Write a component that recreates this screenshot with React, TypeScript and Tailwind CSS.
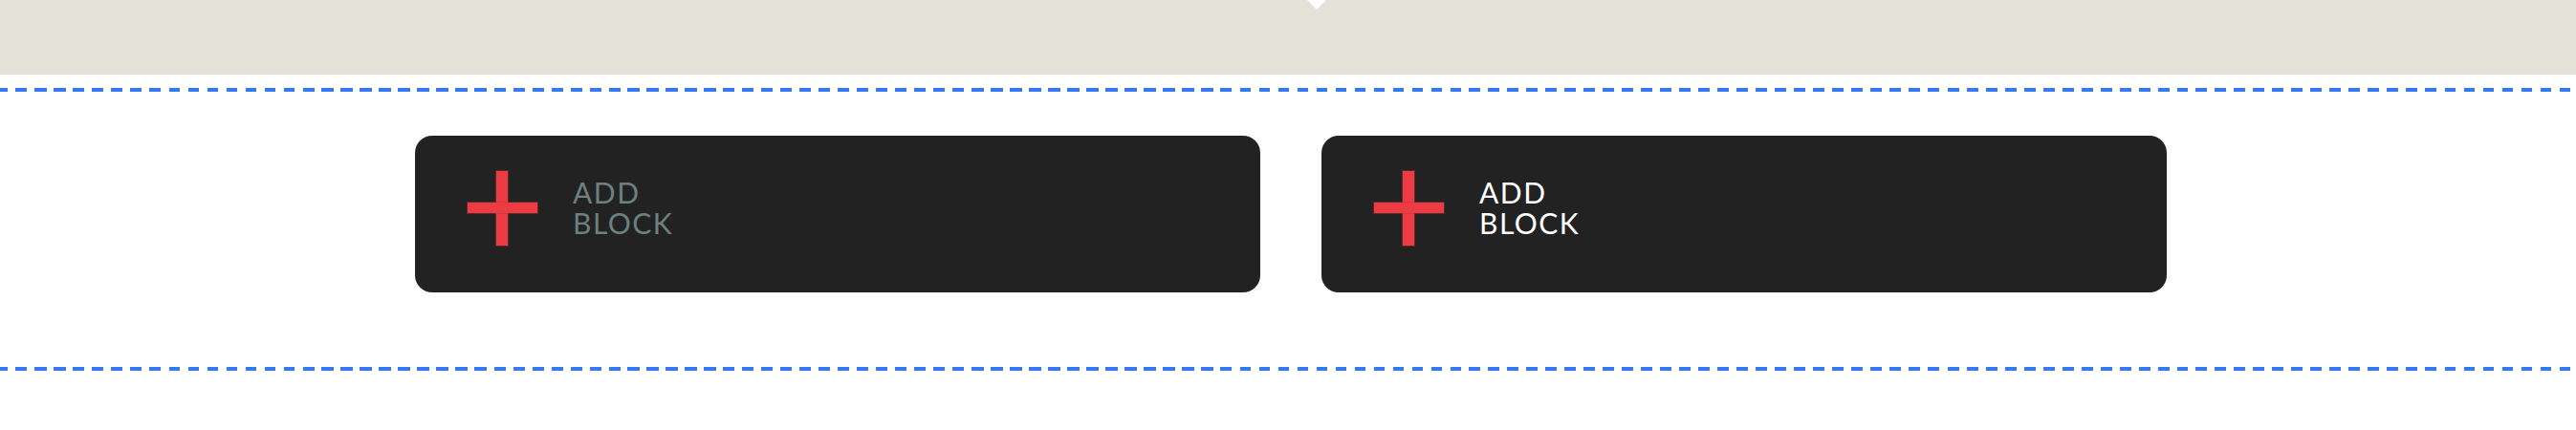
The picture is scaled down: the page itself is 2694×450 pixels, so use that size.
import React from 'react';

const dashed =
  'h-[4px] w-full bg-[repeating-linear-gradient(90deg,#3479f6_0px_8.5px,transparent_8.5px_16.5px,#3479f6_16.5px_20px)]';

const AddBlock = ({ muted }: { muted?: boolean }) => {
  return (
    <button className="w-[884px] h-[164px] shrink-0 rounded-[18px] bg-[#222222] flex items-center pl-[55px] pb-[12px] text-left">
      {/* plus sign */}
      <span className="relative w-[73px] h-[78px] shrink-0">
        <span className="absolute left-[30px] top-0 w-[12px] h-[78px] bg-[#ec3b43] ring-1 ring-[#b8343a]/40" />
        <span className="absolute left-0 top-[33px] w-[73px] h-[11px] bg-[#ec3b43] ring-1 ring-[#b8343a]/40" />
        <span className="absolute left-[30px] top-[33px] w-[12px] h-[11px] bg-[#ec3b43]" />
      </span>
      <span
        className={
          'ml-[37px] -mt-[3px] flex flex-col text-[30px] leading-[32px] font-normal tracking-[1.5px] uppercase font-["Lato",sans-serif] ' +
          (muted ? 'text-[#6c8080]' : 'text-white')
        }
      >
        <span>Add</span>
        <span>Block</span>
      </span>
    </button>
  );
};

const App = () => {
  return (
    <div className="w-full h-[450px] bg-white">
      <div className="relative h-[78px] bg-[#e4e1d9]">
        <span className="absolute left-[1367px] top-0 w-0 h-0 border-l-[10px] border-r-[10px] border-t-[10px] border-l-transparent border-r-transparent border-t-white" />
      </div>

      <div className="pt-[14px]">
        <div className={dashed} />
        <div className="flex justify-center gap-[64px] pl-[6px] pt-[46px] pb-[78px]">
          <AddBlock muted />
          <AddBlock />
        </div>
        <div className={dashed} />
      </div>
    </div>
  );
};

export default App;
